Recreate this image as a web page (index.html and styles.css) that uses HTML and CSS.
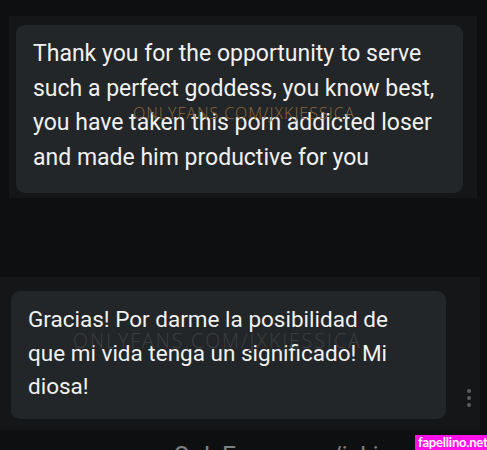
FILE: index.html
```html
<!DOCTYPE html>
<html>
<head>
<meta charset="utf-8">
<link rel="stylesheet" href="styles.css">
</head>
<body>
<div class="page">
  <section class="panel panel-top">
    <div class="bubble bubble-top">
      <p class="msg">Thank you for the opportunity to serve such a perfect goddess, you know best, you have taken this porn addicted loser and made him productive for you</p>
      <span class="wm wm-orange">ONLYFANS.COM/JXKJESSICA</span>
    </div>
  </section>
  <section class="panel panel-bottom">
    <div class="bubble bubble-bottom">
      <p class="msg msg-b">Gracias! Por darme la posibilidad de que mi vida tenga un significado! Mi diosa!</p>
      <span class="wm wm-gray">ONLYFANS.COM/JXKJESSICA</span>
    </div>
    <div class="menu"><i></i><i></i><i></i></div>
  </section>
  <div class="footer">OnlyFans.com/jxkjessicador</div>
  <div class="badge">fapellino.net</div>
</div>
</body>
</html>
```
FILE: styles.css
```css
html, body {
  margin: 0;
  padding: 0;
  background: #0e0f11;
}
.page {
  position: relative;
  width: 487px;
  height: 450px;
  overflow: hidden;
  padding-top: 16px;
  box-sizing: border-box;
  font-family: Roboto, "Liberation Sans", sans-serif;
}
.panel {
  background: #151618;
  box-sizing: border-box;
}
.panel-top {
  margin-left: 9px;
  width: 468px;
  padding: 9px 14px 5px 7px;
}
.bubble {
  position: relative;
  background: #232628;
  border-radius: 9px;
  box-sizing: border-box;
}
.bubble-top {
  width: 447px;
  padding: 12px 14px 18px 17px;
}
.msg {
  margin: 0;
  color: #f1f1f1;
  font-size: 23px;
  line-height: 34.5px;
}
.msg-b {
  font-size: 22.5px;
  line-height: 33.5px;
}
.panel-bottom {
  margin-top: 79px;
  width: 480px;
  height: 153px;
  padding: 14px 0 0 11px;
  display: flex;
  align-items: flex-start;
}
.bubble-bottom {
  width: 435px;
  height: 128px;
  padding: 12px 40px 0 17px;
}
.menu {
  display: flex;
  flex-direction: column;
  gap: 3px;
  margin: 98px 0 0 21px;
}
.menu i {
  display: block;
  width: 4px;
  height: 4px;
  border-radius: 50%;
  background: #5b5d60;
}
.wm {
  position: absolute;
  font-family: "Open Sans", Lato, sans-serif;
  font-weight: 300;
  white-space: nowrap;
  pointer-events: none;
}
.wm-orange {
  left: 117px;
  top: 77px;
  font-size: 16px;
  color: #8c683a;
  letter-spacing: 1px;
}
.wm-gray {
  left: 62px;
  top: 36px;
  font-size: 19.5px;
  color: #3c3f42;
  letter-spacing: 2px;
}
.footer {
  margin: 12px 0 0 173px;
  color: #7d7f82;
  font-size: 25px;
  white-space: nowrap;
  line-height: 30px;
}
.badge {
  position: absolute;
  right: 0;
  bottom: 0;
  width: 72px;
  height: 15px;
  padding-left: 3px;
  box-sizing: border-box;
  background: #ff10e8;
  color: #ffffff;
  font-family: Lato, sans-serif;
  font-weight: 700;
  font-size: 13px;
  line-height: 15px;
  letter-spacing: -0.2px;
  white-space: nowrap;
}
```
